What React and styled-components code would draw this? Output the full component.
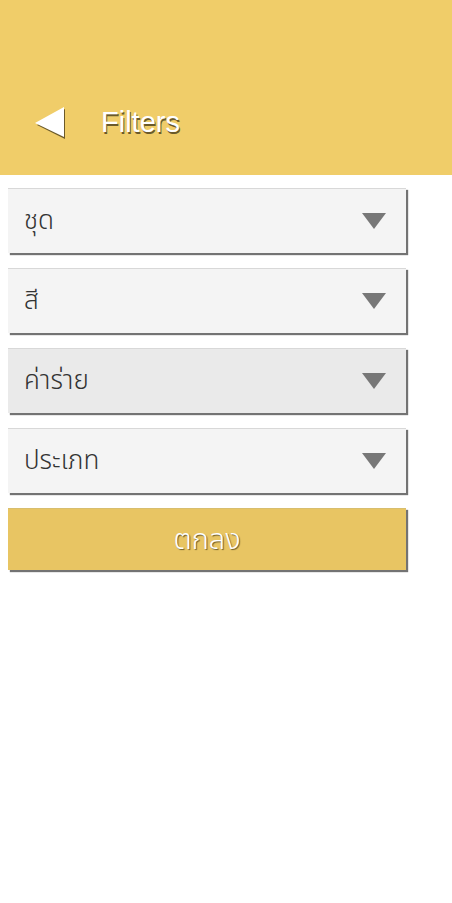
import React from "react";
import styled, { createGlobalStyle } from "styled-components";

const Global = createGlobalStyle`
  html, body { margin: 0; padding: 0; background: #fff; }
  body { font-family: "Noto Sans Thai", "Noto Sans", "DejaVu Sans", sans-serif; }
`;

const Page = styled.div`
  width: 452px;
  min-height: 903px;
  background: #fff;
`;

const Header = styled.header`
  height: 175px;
  background: #f0cd69;
  display: flex;
  align-items: flex-end;
  padding: 0 0 36px 35px;
  box-sizing: border-box;
  gap: 36px;
`;

const BackButton = styled.button`
  border: none;
  background: none;
  padding: 0;
  width: 30px;
  height: 32px;
  display: flex;
  cursor: pointer;
`;

const Title = styled.h1`
  margin: 0;
  font-family: "Liberation Sans", Arial, sans-serif;
  font-weight: 400;
  font-size: 29px;
  line-height: 34px;
  color: #fff;
  text-shadow: 1px 2px 0 #6b5a2a;
`;

const List = styled.div`
  display: flex;
  flex-direction: column;
  gap: 15px;
  padding: 13px 0 0 8px;
  width: 398px;
`;

const Select = styled.div`
  height: 65px;
  box-sizing: border-box;
  background: ${(p) => (p.$active ? "#eaeaea" : "#f4f4f4")};
  border-top: 1px solid #d8d8d8;
  box-shadow: 2px 2px 1px rgba(0, 0, 0, 0.55);
  display: flex;
  align-items: center;
  justify-content: space-between;
  padding: 0 20px 0 16px;
  font-size: 26px;
  font-weight: 300;
  color: #333;
`;

const Label = styled.span`
  line-height: 1;
`;

const Caret = styled.svg`
  width: 24px;
  height: 16px;
  display: block;
`;

const Submit = styled.button`
  height: 62px;
  border: none;
  border-top: 1px solid #d8be6e;
  background: #e8c563;
  box-shadow: 2px 2px 1px rgba(0, 0, 0, 0.55);
  color: #fff;
  font-family: inherit;
  font-size: 29px;
  font-weight: 300;
  text-shadow: 1px 1px 1px #6b5a2a;
  cursor: pointer;
  padding: 0;
`;

const items = ["ชุด", "สี", "ค่าร่าย", "ประเภท"];

export default function App() {
  return (
    <Page>
      <Global />
      <Header>
        <BackButton aria-label="back">
          <svg width="30" height="32" viewBox="0 0 30 32">
            <polygon points="30,2 30,32 2,18" fill="#6b5a2a" />
            <polygon points="29,0 29,30 0,16" fill="#fff" />
          </svg>
        </BackButton>
        <Title>Filters</Title>
      </Header>
      <List>
        {items.map((t, i) => (
          <Select key={t} $active={i === 2}>
            <Label>{t}</Label>
            <Caret viewBox="0 0 24 16">
              <polygon points="0,0 24,0 12,16" fill="#777" />
            </Caret>
          </Select>
        ))}
        <Submit>ตกลง</Submit>
      </List>
    </Page>
  );
}
